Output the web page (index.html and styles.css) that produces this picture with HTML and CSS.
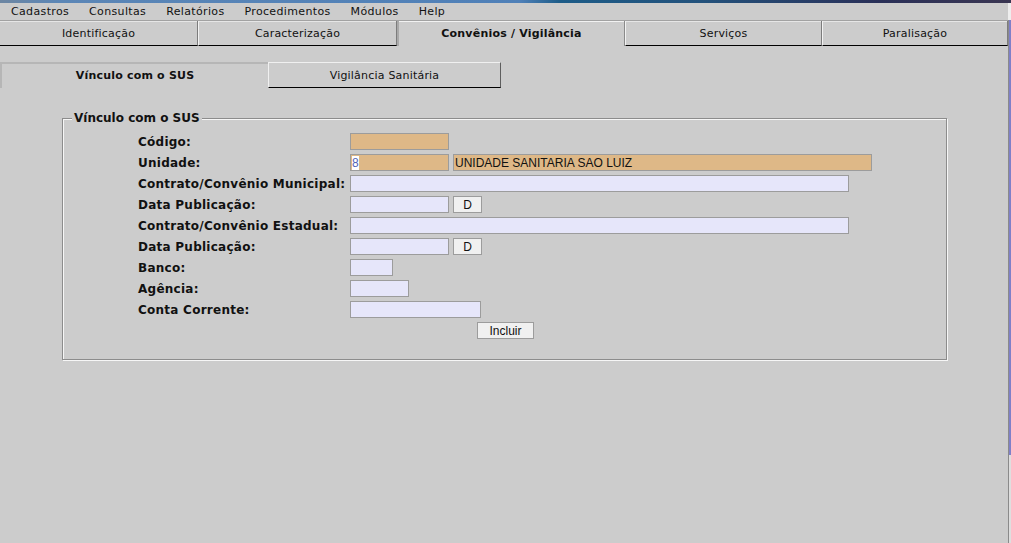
FILE: index.html
```html
<!DOCTYPE html>
<html lang="pt-BR">
<head>
<meta charset="utf-8">
<title>Convênios / Vigilância</title>
<link rel="stylesheet" href="styles.css">
</head>
<body>
<div class="topstrip"></div>
<div class="screen">
  <div class="app">
    <nav class="menubar">
      <span class="menu">Cadastros</span>
      <span class="menu">Consultas</span>
      <span class="menu">Relatórios</span>
      <span class="menu">Procedimentos</span>
      <span class="menu">Módulos</span>
      <span class="menu">Help</span>
    </nav>
    <div class="tabs">
      <div class="tab first">Identificação</div>
      <div class="tab">Caracterização</div>
      <div class="tab selected">Convênios / Vigilância</div>
      <div class="tab">Serviços</div>
      <div class="tab">Paralisação</div>
    </div>
    <div class="subtabs">
      <div class="subtab selected">Vínculo com o SUS</div>
      <div class="subtab">Vigilância Sanitária</div>
    </div>
    <fieldset class="group">
      <legend class="group-title">Vínculo com o SUS</legend>
      <div class="form">
        <div class="row"><span class="label">Código:</span><span class="field tan w99"></span></div>
        <div class="row"><span class="label">Unidade:</span><span class="field tan w99"><span class="sel-text">8</span></span><span class="field tan w419">UNIDADE SANITARIA SAO LUIZ</span></div>
        <div class="row"><span class="label">Contrato/Convênio Municipal:</span><span class="field w499"></span></div>
        <div class="row"><span class="label">Data Publicação:</span><span class="field w99"></span><button class="btn btn-d">D</button></div>
        <div class="row"><span class="label">Contrato/Convênio Estadual:</span><span class="field w499"></span></div>
        <div class="row"><span class="label">Data Publicação:</span><span class="field w99"></span><button class="btn btn-d">D</button></div>
        <div class="row"><span class="label">Banco:</span><span class="field w43"></span></div>
        <div class="row"><span class="label">Agência:</span><span class="field w59"></span></div>
        <div class="row"><span class="label">Conta Corrente:</span><span class="field w131"></span></div>
      </div>
      <div class="actions"><button class="btn btn-incluir">Incluir</button></div>
    </fieldset>
  </div>
  <div class="edge">
    <div class="edge-top"></div>
    <div class="edge-blue"></div>
    <div class="edge-low"></div>
  </div>
</div>
</body>
</html>
```
FILE: styles.css
```css
* { box-sizing: border-box; }

body {
  margin: 0;
  width: 1011px;
  height: 543px;
  overflow: hidden;
  background: #cccccc;
  color: #111;
  font-family: "DejaVu Sans", "Noto Sans", sans-serif;
  font-size: 11px;
}

.topstrip {
  height: 3px;
  background: linear-gradient(90deg, #6d86a2 0, #5b86b6 60px, #4f80b8 520px, #1d5c88 560px, #23527c 700px, #2a3058 880px, #3a3652 100%);
}

.screen {
  display: flex;
  height: 540px;
}

.app {
  width: 1008px;
  flex: none;
}

/* menu bar */
.menubar {
  display: flex;
  height: 17px;
  align-items: center;
  padding-left: 1px;
}
.menu {
  padding: 0 10px;
  line-height: 17px;
  letter-spacing: 0.35px;
  white-space: nowrap;
}

/* main tabs */
.tabs {
  display: grid;
  grid-template-columns: 198px 199px 228px 197px 186px;
  height: 26px;
  border-top: 1px solid #a2a2a2;
}
.tab {
  display: flex;
  align-items: center;
  justify-content: center;
  border-left: 1px solid #f2f2f2;
  border-right: 1px solid #7c7c7c;
  border-bottom: 1px solid #000;
  box-shadow: inset 0 1px 0 #e6e6e6;
  letter-spacing: 0.2px;
  white-space: nowrap;
}
.tab.first { border-left: none; }
.tab.selected {
  font-weight: bold;
  border-bottom: none;
  border-left: 2px solid #a9a9a9;
  border-right: 1px solid #8a8a8a;
  box-shadow: inset 0 1px 0 #f2f2f2;
  padding-bottom: 1px;
}

/* sub tabs */
.subtabs {
  display: grid;
  grid-template-columns: 268px 233px;
  height: 26px;
  margin-top: 16px;
}
.subtab {
  display: flex;
  align-items: center;
  justify-content: center;
  border-top: 1px solid #f0f0f0;
  border-left: 1px solid #f0f0f0;
  border-right: 1px solid #5e5e5e;
  border-bottom: 1px solid #000;
  letter-spacing: 0.2px;
  white-space: nowrap;
}
.subtab.selected {
  font-weight: bold;
  border-top: 2px solid #b6b6b6;
  border-left: 2px solid #b6b6b6;
  border-right: none;
  border-bottom: none;
  padding-bottom: 1px;
}

/* group box */
.group {
  margin: 23px 0 0 62px;
  padding: 0;
  width: 885px;
  min-width: 0;
  border: 1px solid #8c8c8c;
  box-shadow: inset 1px 1px 0 #f6f6f6, 1px 1px 0 #f6f6f6;
}
.group-title {
  margin-left: 9px;
  padding: 0 2px;
  font-size: 12px;
  line-height: 14px;
  font-weight: bold;
  background: #cccccc;
}

.form {
  display: flex;
  flex-direction: column;
  gap: 4px;
  padding: 8px 0 0 75px;
}
.row {
  display: flex;
  align-items: center;
  height: 17px;
  gap: 4px;
}
.label {
  width: 208px;
  height: 17px;
  padding-top: 2px;
  font-size: 12px;
  font-weight: bold;
  line-height: 15px;
  letter-spacing: 0.25px;
  white-space: nowrap;
}

.field {
  display: flex;
  align-items: center;
  height: 17px;
  border: 1px solid #9c9c9c;
  background: #e6e6fa;
  font-family: "Liberation Sans", Arial, sans-serif;
  font-size: 12px;
  color: #111;
  padding: 1px 0 0 1px;
  white-space: nowrap;
  overflow: hidden;
}
.field.tan { background: #deb887; }
.sel-text {
  background: #ffffff;
  color: #5264b8;
  line-height: 14px;
}

.w43 { width: 43px; }
.w59 { width: 59px; }
.w99 { width: 99px; }
.w131 { width: 131px; }
.w419 { width: 419px; }
.w499 { width: 499px; }

.btn {
  height: 17px;
  padding: 1px 0 0;
  border: 1px solid #9c9c9c;
  background: #f0f0f0;
  color: #111;
  font-family: "Liberation Sans", Arial, sans-serif;
  font-size: 12px;
  line-height: 14px;
}
.btn-d { width: 29px; }

.actions {
  display: flex;
  justify-content: center;
  padding: 4px 0 20px 2px;
}
.btn-incluir { width: 57px; }

/* right window edge */
.edge {
  width: 3px;
  display: flex;
  flex-direction: column;
}
.edge-top {
  height: 17px;
  background: #eeeeee;
}
.edge-blue {
  height: 435px;
  border-left: 1px solid #8a8a8a;
  background: #7f80c8;
}
.edge-low {
  flex: 1;
  border-left: 1px solid #8a8a8a;
  background: #dedede;
}
```
